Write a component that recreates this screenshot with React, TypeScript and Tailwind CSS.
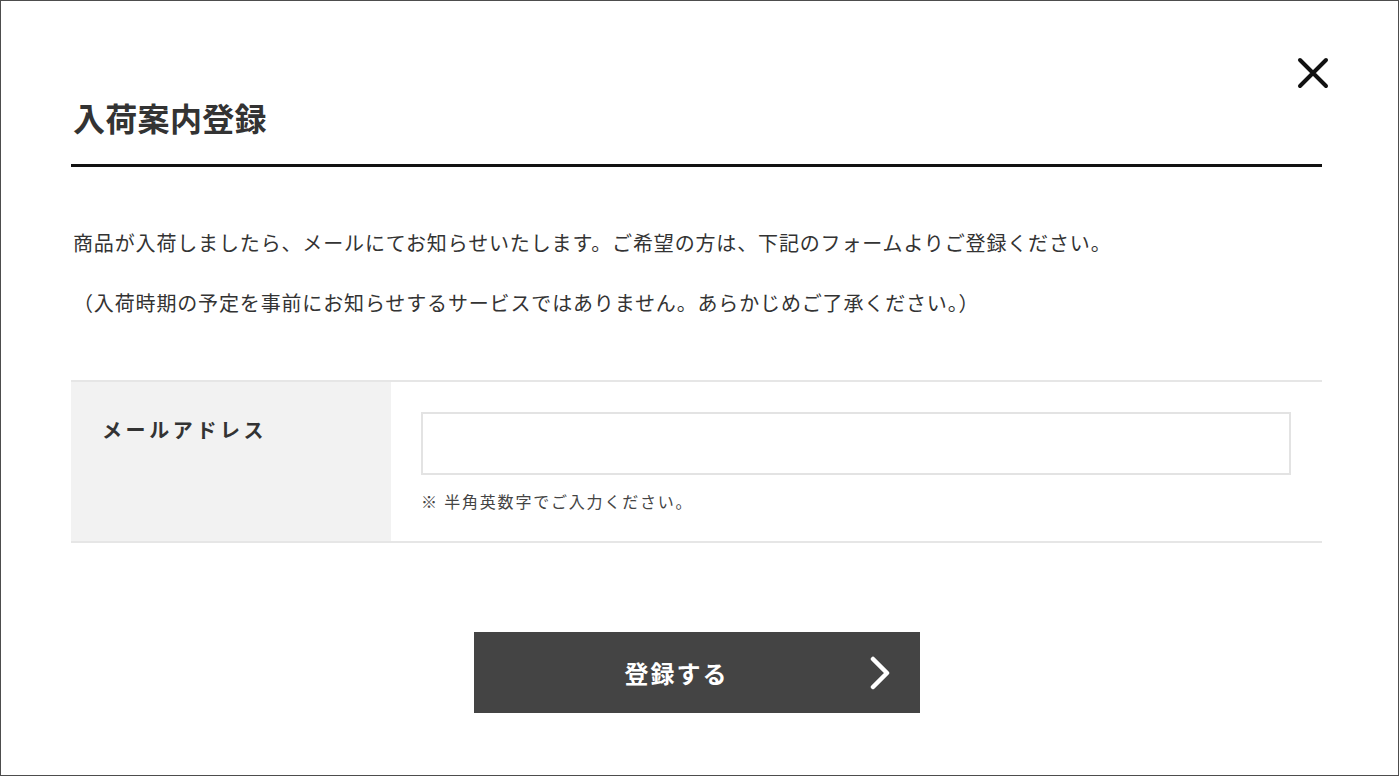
import React from "react";

const font = { fontFamily: '"Noto Sans CJK JP", "Noto Sans", sans-serif' };

export default function App() {
  return (
    <div
      className="relative w-[1399px] h-[776px] border border-[#4d4d4d] bg-white text-[#333333] overflow-hidden"
      style={font}
    >
      <button
        aria-label="close"
        className="absolute top-[56px] right-[69px] w-[32px] h-[32px] flex items-center justify-center"
      >
        <svg width="32" height="32" viewBox="0 0 32 32" fill="none">
          <path d="M3 3 L29 29 M29 3 L3 29" stroke="#111" strokeWidth="4" strokeLinecap="round" />
        </svg>
      </button>

      <div className="pl-[70px] pr-[76px] pt-[100px]">
        <h1 className="text-[32px] leading-[32px] font-bold text-[#333] pl-[2px] pb-[31px] border-b-[3px] border-[#111] tracking-[0.3px]">
          入荷案内登録
        </h1>

        <div className="pt-[61px] pl-[2px] text-[20px] leading-[30px] tracking-[0.85px] text-[#333]">
          <p>商品が入荷しましたら、メールにてお知らせいたします。ご希望の方は、下記のフォームよりご登録ください。</p>
          <p className="mt-[30px]">（入荷時期の予定を事前にお知らせするサービスではありません。あらかじめご了承ください。）</p>
        </div>

        <div className="mt-[62px] flex border-t-2 border-b-2 border-[#e6e6e6]">
          <div className="w-[320px] shrink-0 bg-[#f2f2f2] pl-[31px] pt-[33px]">
            <span className="text-[20px] leading-[30px] font-bold tracking-[3.6px] text-[#333]">メールアドレス</span>
          </div>
          <div className="flex-1 pl-[30px] pr-[31px] pt-[30px] pb-[28px]">
            <input
              type="text"
              className="block w-full h-[63px] border-2 border-[#e3e3e3] bg-white outline-none px-3 text-[18px]"
            />
            <p className="mt-[14px] text-[16px] leading-[24px] tracking-[1.8px] text-[#444]">※ 半角英数字でご入力ください。</p>
          </div>
        </div>

        <div className="flex justify-center mt-[89px]">
          <button className="relative w-[446px] h-[81px] bg-[#444444] text-white flex items-center justify-center pr-[40px]">
            <span className="text-[24px] leading-[32px] font-bold tracking-[2px]">登録する</span>
            <svg
              className="absolute right-[29px] top-[24px]"
              width="22"
              height="34"
              viewBox="0 0 22 34"
              fill="none"
            >
              <path d="M4 3 L18 17 L4 31" stroke="#fff" strokeWidth="4.5" strokeLinecap="round" strokeLinejoin="round" />
            </svg>
          </button>
        </div>
      </div>
    </div>
  );
}
